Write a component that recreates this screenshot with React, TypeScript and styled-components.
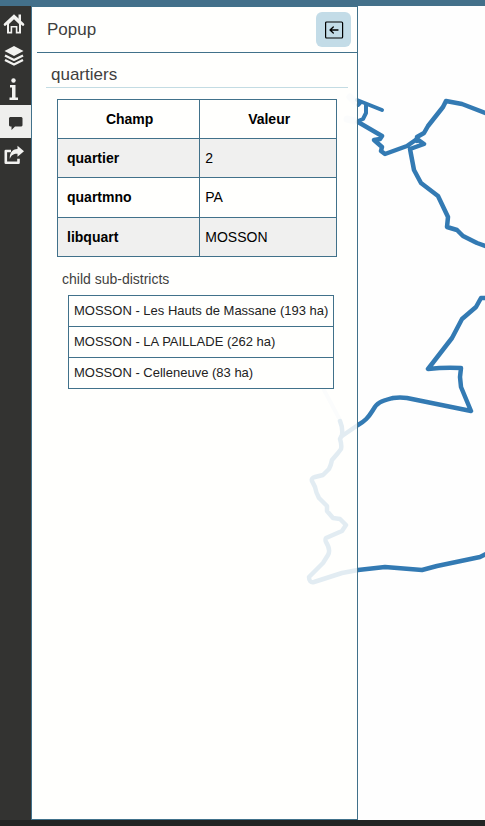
import React from "react";
import styled, { createGlobalStyle } from "styled-components";

const line = "#41718a";

const GlobalStyle = createGlobalStyle`
  *, *::before, *::after { box-sizing: border-box; }
  body {
    margin: 0;
    background: #fefefe;
    color: #333;
    font-family: "Liberation Sans", Arial, sans-serif;
    font-size: 14px;
    line-height: 20px;
  }
`;

const Page = styled.div`
  display: grid;
  grid-template-rows: 6px 1fr 6px;
  height: 100vh;
  overflow: hidden;
`;

const TopBar = styled.header`
  background: #43708a;
`;

const BottomBar = styled.footer`
  background: #222524;
`;

const Workspace = styled.main`
  display: flex;
  min-height: 0;
`;

const Dock = styled.nav`
  display: flex;
  flex-direction: column;
  flex: none;
  width: 31px;
  background: #333331;
`;

const DockButton = styled.button<{ $active?: boolean }>`
  display: flex;
  align-items: center;
  justify-content: flex-start;
  height: 33px;
  padding: 0 0 0 3px;
  border: 0;
  cursor: pointer;
  color: ${(p) => (p.$active ? "#333331" : "#f2f2f0")};
  background: ${(p) => (p.$active ? "#efefed" : "transparent")};
`;

const MapArea = styled.section`
  position: relative;
  display: flex;
  flex: 1;
  min-width: 0;
  overflow: hidden;
`;

const MapCanvas = styled.svg`
  position: absolute;
  inset: 0;
  width: 100%;
  height: 100%;
  fill: none;
  stroke: #337ab3;
  stroke-width: 5;
  stroke-linecap: round;
  stroke-linejoin: round;
`;

const Panel = styled.aside`
  position: relative;
  width: 327px;
  max-width: 100%;
  padding-left: 5px;
  border: 1px solid ${line};
  background: rgba(255, 255, 253, 0.86);
`;

const PanelHeader = styled.div`
  display: flex;
  align-items: center;
  justify-content: space-between;
  height: 46px;
  padding: 0 6px 0 10px;
  border-bottom: 1px solid ${line};
`;

const PanelTitle = styled.h3`
  margin: 0;
  padding-top: 1px;
  color: #3f3f3f;
  font-size: 17px;
  font-weight: 400;
`;

const CloseButton = styled.button`
  display: grid;
  place-items: center;
  width: 35px;
  height: 35px;
  padding: 0;
  border: 0;
  border-radius: 6px;
  background: #c3dce7;
  color: #000;
  cursor: pointer;
`;

const PanelBody = styled.div`
  padding: 12px 9px 0;
`;

const LayerTitle = styled.h4`
  margin: 0 0 11px;
  padding: 0 5px 2px;
  border-bottom: 1px solid #c3dce3;
  color: #3f3f3f;
  font-size: 17px;
  font-weight: 400;
`;

const Details = styled.div`
  padding: 0 11px;
`;

const FieldTable = styled.table`
  width: 100%;
  height: 158px;
  border-collapse: collapse;
  table-layout: fixed;
  color: #000;

  tr { height: 39px; }
  th, td {
    padding: 0 5px;
    border: 1px solid ${line};
    text-align: left;
  }
  th { padding-left: 9px; }
  thead th { padding-left: 7px; text-align: center; }
  thead th:first-child { width: 51%; }
  tbody tr:nth-child(odd) { background: #f0f0ef; }
`;

const ChildTitle = styled.h5`
  margin: 12px 5px 6px;
  color: #3f3f3f;
  font-size: 14px;
  font-weight: 400;
`;

const ChildList = styled.ul`
  width: fit-content;
  margin: 0 11px;
  padding: 0;
  border: 1px solid ${line};
  list-style: none;
  color: #222;
  font-size: 13px;
  white-space: nowrap;
`;

const ChildItem = styled.li`
  padding: 5px;

  & + & { border-top: 1px solid ${line}; }
`;

const HomeIcon = () => (
  <svg width="22" height="22" viewBox="0 0 22 22" aria-hidden="true">
    <path d="M2 12.5 11 4 20 12.500" fill="none" stroke="currentColor" strokeWidth="2.600" strokeLinecap="round" />
    <path d="M15.500 2.500h2.500v7l-2.500-2.500z" fill="currentColor" />
    <path
      d="M4 11.500 11 5 18 11.500V21.500H12.800V15.500H9.200V21.500H4z M6 12V19.800H7.600V14H14.400V19.800H16V12L11 7.300z"
      fill="currentColor"
      fillRule="evenodd"
    />
  </svg>
);

const LayersIcon = () => (
  <svg width="22" height="22" viewBox="0 0 22 22" aria-hidden="true">
    <path d="M11 1 20.5 6 11 11 1.5 6z" fill="currentColor" />
    <path
      d="M2 10.5 11 15l9-4.5M2 15l9 4.5L20 15"
      fill="none"
      stroke="currentColor"
      strokeWidth="2.4"
    />
  </svg>
);

const InfoIcon = () => (
  <svg width="22" height="24" viewBox="0 0 22 24" aria-hidden="true">
    <circle cx="10.5" cy="3.500" r="2.2" fill="currentColor" />
    <path d="M7 8h5.500v12.500h2.5v2.5H6.500v-2.500h2.500v-10H7z" fill="currentColor" />
  </svg>
);

const CommentIcon = () => (
  <svg width="22" height="22" viewBox="0 0 22 22" aria-hidden="true">
    <path d="M7 6h11.5l1 1v7.5l-1 1H12L8.5 19v-3.5H7l-1-1V7z" fill="currentColor" />
  </svg>
);

const ShareIcon = () => (
  <svg width="22" height="22" viewBox="0 0 22 22" aria-hidden="true">
    <path
      d="M8 7H2.8v11.8H15.5v-4"
      fill="none"
      stroke="currentColor"
      strokeWidth="2.6"
      strokeLinejoin="round"
    />
    <path d="M14.500 1.700 21 7.200l-6.500 5.500V9.800c-4.200-.1-6 1.200-7.700 5.200C6.400 9.300 9 5.200 14.500 5z" fill="currentColor" />
  </svg>
);

const BackIcon = () => (
  <svg
    width="20"
    height="20"
    viewBox="0 0 20 20"
    fill="none"
    stroke="currentColor"
    strokeLinecap="round"
    strokeLinejoin="round"
    aria-hidden="true"
  >
    <rect x="1.6" y="2" width="17" height="16" rx="1" strokeWidth="1.2" />
    <path d="M14 10H6M9.3 7 6 10l3.300 3" strokeWidth="1.300" />
  </svg>
);

const tools = [
  { label: "Home", icon: <HomeIcon /> },
  { label: "Layers", icon: <LayersIcon /> },
  { label: "Information", icon: <InfoIcon /> },
  { label: "Popup", icon: <CommentIcon />, active: true },
  { label: "Share", icon: <ShareIcon /> },
];

const fields = [
  ["quartier", "2"],
  ["quartmno", "PA"],
  ["libquart", "MOSSON"],
];

const children = [
  "MOSSON - Les Hauts de Massane (193 ha)",
  "MOSSON - LA PAILLADE (262 ha)",
  "MOSSON - Celleneuve (83 ha)",
];

const DistrictMap = () => (
  <MapCanvas role="img" aria-label="District boundaries">
    <g transform="translate(-31 -6)">
      <path
        d="M357 100 382 110M366 105 366 113 363 119 358 121M358 105 360 103"
        strokeWidth="4"
      />
      <path d="M358 122 382 136 380 139 374 140 382 147 381 151 385 154 407 146 417 139 424 144 410 149 414 170 421 183 438 196 448 217 447 227 457 230 463 236 477 243 488 247" strokeWidth="4.500" />
      <path d="M417 141 417 137 424 133 428 126 443 107 446 101 462 104 488 114" strokeWidth="4.500" />
      <path d="M486 90v8" strokeWidth="2" strokeOpacity="0.5" strokeDasharray="2 4" />
      <path d="M488 298 481 298 476 307 462 319 452 338 428 369 Q445 367 461 368 L460 377 461 387 471 411 407 398 Q400 397 393 398 C382 401 377 402 373 410 C368 418 365 421 358 425 L342 436" strokeWidth="4.500" />
      <path d="M340 421 Q343 428 342 435 L340 439 Q342 445 341 449 L338 453 332 460 Q331 465 329 469 L323 475 315 477 Q311 478 312 481 L315 487 Q316 493 319 498 L327 506 327 511 333 518 340 519 346 525 342 531 326 538 Q325 540 326 542 Q331 550 328 555 L323 563 309 577 Q309 583 314 582 L342 573 358 570 385 567 422 570 437 566 480 557 488 553" strokeWidth="4.500" />
      <g strokeOpacity="0.15">
        <path d="M324 390 340 420" strokeWidth="4" />
        <path d="M347 119 355 121M350 97 354 101" strokeWidth="7" />
      </g>
    </g>
  </MapCanvas>
);

export default function App() {
  return (
    <>
      <GlobalStyle />
      <Page>
        <TopBar />
        <Workspace>
          <Dock aria-label="Map tools">
            {tools.map((tool) => (
              <DockButton
                key={tool.label}
                type="button"
                aria-label={tool.label}
                $active={tool.active}
              >
                {tool.icon}
              </DockButton>
            ))}
          </Dock>
          <MapArea>
            <DistrictMap />
            <Panel>
              <PanelHeader>
                <PanelTitle>Popup</PanelTitle>
                <CloseButton type="button" aria-label="Close panel">
                  <BackIcon />
                </CloseButton>
              </PanelHeader>
              <PanelBody>
                <LayerTitle>quartiers</LayerTitle>
                <Details>
                  <FieldTable>
                    <thead>
                      <tr>
                        <th scope="col">Champ</th>
                        <th scope="col">Valeur</th>
                      </tr>
                    </thead>
                    <tbody>
                      {fields.map(([name, value]) => (
                        <tr key={name}>
                          <th scope="row">{name}</th>
                          <td>{value}</td>
                        </tr>
                      ))}
                    </tbody>
                  </FieldTable>
                  <ChildTitle>child sub-districts</ChildTitle>
                  <ChildList>
                    {children.map((name) => (
                      <ChildItem key={name}>{name}</ChildItem>
                    ))}
                  </ChildList>
                </Details>
              </PanelBody>
            </Panel>
          </MapArea>
        </Workspace>
        <BottomBar />
      </Page>
    </>
  );
}
